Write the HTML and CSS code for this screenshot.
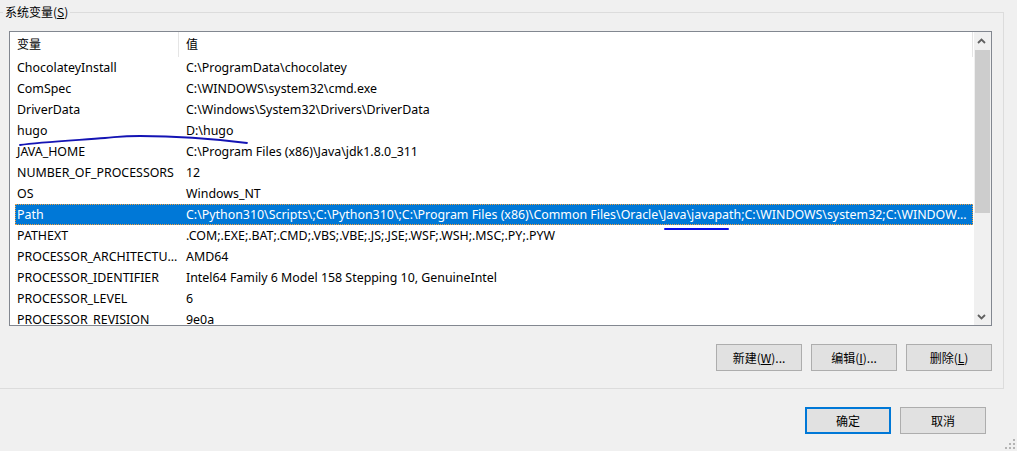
FILE: index.html
```html
<!DOCTYPE html>
<html lang="zh-CN">
<head>
<meta charset="utf-8">
<title>系统变量</title>
<link rel="stylesheet" href="styles.css">
</head>
<body>
<div class="dialog">
  <div class="group">
    <div class="legend">系统变量(<u>S</u>)</div>
    <div class="list">
      <div class="grid">
        <div class="head"><div class="c1">变量</div><div class="c2">值</div></div>
        <div class="row"><div class="c1">ChocolateyInstall</div><div class="c2">C:\ProgramData\chocolatey</div></div>
        <div class="row"><div class="c1">ComSpec</div><div class="c2">C:\WINDOWS\system32\cmd.exe</div></div>
        <div class="row"><div class="c1">DriverData</div><div class="c2">C:\Windows\System32\Drivers\DriverData</div></div>
        <div class="row"><div class="c1">hugo</div><div class="c2">D:\hugo</div></div>
        <div class="row"><div class="c1">JAVA_HOME</div><div class="c2">C:\Program Files (x86)\Java\jdk1.8.0_311</div></div>
        <div class="row"><div class="c1">NUMBER_OF_PROCESSORS</div><div class="c2">12</div></div>
        <div class="row"><div class="c1">OS</div><div class="c2">Windows_NT</div></div>
        <div class="row sel"><div class="c1">Path</div><div class="c2">C:\Python310\Scripts\;C:\Python310\;C:\Program Files (x86)\Common Files\Oracle\Java\javapath;C:\WINDOWS\system32;C:\WINDOWS;C:\WINDOWS\System32\Wbem</div></div>
        <div class="row"><div class="c1">PATHEXT</div><div class="c2">.COM;.EXE;.BAT;.CMD;.VBS;.VBE;.JS;.JSE;.WSF;.WSH;.MSC;.PY;.PYW</div></div>
        <div class="row"><div class="c1">PROCESSOR_ARCHITECTURE</div><div class="c2">AMD64</div></div>
        <div class="row"><div class="c1">PROCESSOR_IDENTIFIER</div><div class="c2">Intel64 Family 6 Model 158 Stepping 10, GenuineIntel</div></div>
        <div class="row"><div class="c1">PROCESSOR_LEVEL</div><div class="c2">6</div></div>
        <div class="row"><div class="c1">PROCESSOR_REVISION</div><div class="c2">9e0a</div></div>
      </div>
      <div class="vscroll">
        <div class="arrow"><svg width="17" height="17" viewBox="0 0 17 17"><path d="M4 11 L7.5 7.5 L11 11" fill="none" stroke="#606060" stroke-width="1.8"/></svg></div>
        <div class="track"><div class="thumb"></div></div>
        <div class="arrow"><svg width="17" height="17" viewBox="0 0 17 17"><path d="M4 7 L7.5 10.5 L11 7" fill="none" stroke="#606060" stroke-width="1.8"/></svg></div>
      </div>
    </div>
    <div class="btns">
      <div class="btn">新建(<u>W</u>)...</div>
      <div class="btn">编辑(<u>I</u>)...</div>
      <div class="btn">删除(<u>L</u>)</div>
    </div>
  </div>
  <div class="footer">
    <div class="btn default">确定</div>
    <div class="btn">取消</div>
  </div>
  <svg class="ink" width="1017" height="451" viewBox="0 0 1017 451">
    <path d="M20 145 C 40 142, 80 140, 105 138 C 118 137, 122 136, 140 136 C 175 136, 215 139, 247 143" fill="none" stroke="#1414b4" stroke-width="1.8" stroke-linecap="round"/>
    <path d="M665 229 L728 229" fill="none" stroke="#0a0ae6" stroke-width="2" stroke-linecap="round"/>
  </svg>
  <svg class="grip" width="12" height="12" viewBox="0 0 12 12">
    <rect x="9" y="1" width="2" height="2" fill="#b4b4b4"/>
    <rect x="5" y="5" width="2" height="2" fill="#b4b4b4"/>
    <rect x="9" y="5" width="2" height="2" fill="#b4b4b4"/>
    <rect x="1" y="9" width="2" height="2" fill="#b4b4b4"/>
    <rect x="5" y="9" width="2" height="2" fill="#b4b4b4"/>
    <rect x="9" y="9" width="2" height="2" fill="#b4b4b4"/>
  </svg>
</div>
</body>
</html>
```
FILE: styles.css
```css
html, body {
  margin: 0;
  padding: 0;
}
body {
  background: #f0f0f0;
  font-family: "Noto Sans", "Noto Sans CJK SC", sans-serif;
  font-size: 12px;
  color: #000;
  width: 1017px;
  height: 451px;
  overflow: hidden;
}
.dialog {
  position: relative;
  width: 1017px;
  height: 451px;
  overflow: hidden;
}
.group {
  box-sizing: border-box;
  width: 1014px;
  height: 377px;
  margin: 12px 0 0 -10px;
  border: 1px solid #dcdcdc;
  padding: 0 11px 0 18px;
}
.legend {
  width: max-content;
  height: 16px;
  line-height: 16px;
  margin: -9px 0 0 -6px;
  padding: 0 2px;
  background: #f0f0f0;
  font-family: "Noto Sans CJK SC", sans-serif;
}
.list {
  box-sizing: border-box;
  height: 295px;
  margin-top: 11px;
  border: 1px solid #828790;
  background: #fff;
  display: flex;
}
.grid {
  flex: 1;
  min-width: 0;
  overflow: hidden;
}
.head, .row {
  display: flex;
  width: 958px;
  margin-left: 5px;
}
.head {
  height: 25px;
  line-height: 24px;
  font-family: "Noto Sans CJK SC", sans-serif;
}
.head .c1 {
  box-sizing: border-box;
  width: 164px;
  padding-left: 2px;
  border-right: 1px solid #e5e5e5;
}
.head .c2 {
  box-sizing: border-box;
  flex: 1;
  padding-left: 7px;
  border-right: 1px solid #e5e5e5;
}
.row {
  box-sizing: border-box;
  height: 21px;
  line-height: 21px;
  font-size: 12.4px;
}
.row .c1, .row .c2 {
  box-sizing: border-box;
  white-space: nowrap;
  overflow: hidden;
  text-overflow: ellipsis;
}
.row .c1 {
  width: 163px;
  padding: 0 0 0 2px;
}
.row .c2 {
  flex: 1;
  padding: 0 4px 0 8px;
}
.row.sel {
  background: #0078d7;
  color: #fff;
  outline: 1px dotted #f0a040;
  outline-offset: -1px;
}
.vscroll {
  width: 17px;
  background: #f0f0f0;
  display: flex;
  flex-direction: column;
}
.arrow {
  height: 17px;
}
.arrow svg {
  display: block;
}
.track {
  flex: 1;
}
.thumb {
  height: 163px;
  margin: 1px 1px 0 1px;
  background: #cdcdcd;
}
.btns {
  display: flex;
  justify-content: flex-end;
  gap: 9px;
  margin-top: 18px;
}
.btn {
  box-sizing: border-box;
  width: 86px;
  height: 27px;
  line-height: 25px;
  text-align: center;
  background: #e1e1e1;
  border: 1px solid #adadad;
  font-family: "Noto Sans CJK SC", sans-serif;
  font-size: 12px;
}
.btn.default {
  border: 2px solid #0078d7;
  line-height: 23px;
}
.footer {
  display: flex;
  justify-content: flex-end;
  gap: 9px;
  margin: 18px 31px 0 0;
}
.ink {
  position: absolute;
  left: 0;
  top: 0;
  pointer-events: none;
}
.grip {
  position: absolute;
  right: 1px;
  bottom: 1px;
}
```
